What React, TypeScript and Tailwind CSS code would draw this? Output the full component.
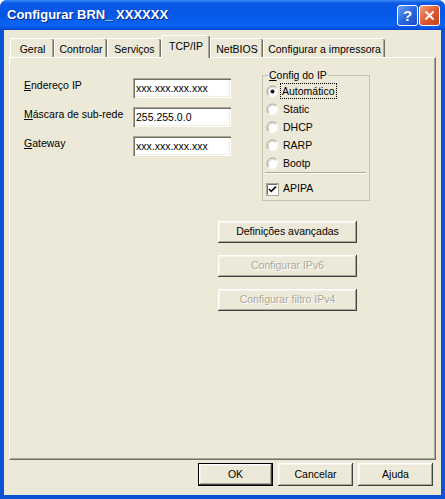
import { ReactNode } from "react";

const tabs = [
  { label: "Geral", w: "w-[44px]" },
  { label: "Controlar", w: "w-[53px]" },
  { label: "Serviços", w: "w-[54px]" },
  { label: "TCP/IP", w: "w-[49px]", active: true },
  { label: "NetBIOS", w: "w-[53px]" },
  { label: "Configurar a impressora", w: "w-[122px]" },
];

const radios = ["Automático", "Static", "DHCP", "RARP", "Bootp"];

const raised =
  "bg-[#ece9d8] shadow-[inset_-1px_-1px_#404040,inset_1px_1px_#ffffff,inset_-2px_-2px_#aca899,inset_2px_2px_#f5f4ea]";

const Btn = ({ children, disabled, w, isDefault }: { children: ReactNode; disabled?: boolean; w: string; isDefault?: boolean }) => (
  <div
    className={`${w} flex items-center justify-center ${raised} ${isDefault ? "border border-black" : ""} ${
      disabled ? "text-[#aca899] [text-shadow:1px_1px_0_#ffffff]" : "text-black"
    }`}
  >
    {children}
  </div>
);

const Field = ({ label, value }: { label: ReactNode; value: string }) => (
  <div className="flex items-start h-[20px]">
    <div className="w-[109px] leading-[13px] pt-[1px]">{label}</div>
    <div className="w-[98px] h-[20px] bg-white flex items-center pl-[3px] pt-[1px] shadow-[inset_1px_1px_#aca899,inset_2px_2px_#716f64,inset_-1px_-1px_#ffffff,inset_-2px_-2px_#f1efe2]">
      {value}
    </div>
  </div>
);

const Radio = ({ checked }: { checked?: boolean }) => (
  <svg width="13" height="13" viewBox="0 0 13 13">
    <circle cx="6.5" cy="6.5" r="5.5" fill="#ffffff" />
    <path d="M2.6 10.4 A5.5 5.5 0 0 1 10.4 2.6" fill="none" stroke="#9a988c" strokeWidth="1" />
    <path d="M3.4 9.6 A4.4 4.4 0 0 1 9.6 3.4" fill="none" stroke="#d4d0c8" strokeWidth="1" />
    <path d="M10.4 2.6 A5.5 5.5 0 0 1 2.6 10.4" fill="none" stroke="#f4f3ee" strokeWidth="1" />
    {checked && <circle cx="6.5" cy="6.5" r="2" fill="#111111" />}
  </svg>
);

const Check = () => (
  <svg width="13" height="13" viewBox="0 0 13 13">
    <rect x="0.5" y="0.5" width="12" height="12" fill="#ffffff" stroke="#aca899" />
    <path d="M1.5 1.5 H11.5 M1.5 1.5 V11.5" stroke="#716f64" strokeWidth="1" />
    <path d="M3 6 L5.2 8.3 L10 3.6" fill="none" stroke="#111111" strokeWidth="1.8" />
  </svg>
);

export default function App() {
  return (
    <div className="w-[445px] h-[499px] flex flex-col rounded-t-[7px] bg-[#0a53d3] font-['Liberation_Sans',Arial,sans-serif] text-[10.5px] text-black overflow-hidden">
      {/* title bar */}
      <div className="h-[30px] flex items-center pl-[7px] pr-[5px] bg-[linear-gradient(180deg,#3d8cf5,#0a5ae6_10%,#0556e8_45%,#0b63f0_85%,#0450e0_95%,#0840c8)]">
        <span className="flex-1 text-white font-bold text-[13px] [text-shadow:1px_1px_0_#0a2a8a]">Configurar BRN_ XXXXXX</span>
        <div className="w-[21px] h-[21px] rounded-[3px] border border-white bg-[linear-gradient(135deg,#6fa2f5,#2a66e0_50%,#1a4fc8)] flex items-center justify-center text-white font-bold text-[15px] leading-none">
          ?
        </div>
        <div className="ml-[1px] w-[21px] h-[21px] rounded-[3px] border border-white bg-[linear-gradient(135deg,#f0a07e,#e2592f_50%,#c7401c)] flex items-center justify-center">
          <svg width="11" height="11" viewBox="0 0 11 11">
            <path d="M1.5 1.5 L9.5 9.5 M9.5 1.5 L1.5 9.5" stroke="#ffffff" strokeWidth="2" />
          </svg>
        </div>
      </div>

      {/* client area */}
      <div className="flex-1 mx-[4px] mb-[4px] bg-[#ece9d8] flex flex-col">
        <div className="h-[27px] pl-[6px] flex items-end">
          {tabs.map((t) =>
            t.active ? (
              <div
                key={t.label}
                className={`${t.w} h-[23px] -mb-[1px] relative z-10 bg-[#ece9d8] border-l border-t border-white rounded-t-[2px] shadow-[inset_-1px_0_#716f64,inset_-2px_0_#aca899] flex justify-center pt-[3px]`}
              >
                {t.label}
              </div>
            ) : (
              <div
                key={t.label}
                className={`${t.w} h-[19px] border-l border-t border-white rounded-t-[2px] shadow-[inset_-1px_0_#716f64,inset_-2px_0_#aca899] flex justify-center pt-[3px]`}
              >
                {t.label}
              </div>
            )
          )}
        </div>

        {/* panel */}
        <div className="ml-[5px] w-[427px] h-[403px] border-l border-t border-white border-r border-b border-r-[#716f64] border-b-[#716f64] shadow-[inset_-1px_-1px_#aca899] flex flex-col">
          <div className="flex items-start pl-[14px]">
            <div className="mt-[20px] flex flex-col gap-[9px]">
              <Field label={<><u>E</u>ndereço IP</>} value="xxx.xxx.xxx.xxx" />
              <Field label={<><u>M</u>áscara de sub-rede</>} value="255.255.0.0" />
              <Field label={<><u>G</u>ateway</>} value="xxx.xxx.xxx.xxx" />
            </div>
            <fieldset className="ml-[31px] mt-[11px] w-[108px] border border-[#c5c2b2] pl-[3px] pr-[2px] pb-[2px]">
              <legend className="ml-[2px] px-[1px] leading-[13px]">
                <u>C</u>onfig do IP
              </legend>
              {radios.map((r, i) => (
                <div key={r} className="h-[18px] flex items-center gap-[4px]">
                  <Radio checked={i === 0} />
                  <span className={i === 0 ? "outline outline-1 outline-dotted outline-black px-[1px] -ml-[2px] leading-[14px]" : "leading-[14px]"}>{r}</span>
                </div>
              ))}
              <div className="mr-[1px] -ml-[1px] border-t border-[#aca899] border-b border-b-white" />
              <div className="mt-[6px] h-[18px] flex items-center gap-[4px]">
                <Check />
                <span>APIPA</span>
              </div>
            </fieldset>
          </div>
          <div className="ml-[208px] mt-[20px] flex flex-col gap-[12px]">
            <Btn w="w-[139px] h-[22px]">Definições avançadas</Btn>
            <Btn w="w-[139px] h-[22px]" disabled>Configurar IPv6</Btn>
            <Btn w="w-[139px] h-[22px]" disabled>Configurar filtro IPv4</Btn>
          </div>
        </div>

        <div className="mt-[3px] pr-[8px] flex justify-end gap-[5px]">
          <Btn w="w-[75px] h-[23px]" isDefault>OK</Btn>
          <Btn w="w-[75px] h-[23px]">Cancelar</Btn>
          <Btn w="w-[75px] h-[23px]">Ajuda</Btn>
        </div>
      </div>
    </div>
  );
}
